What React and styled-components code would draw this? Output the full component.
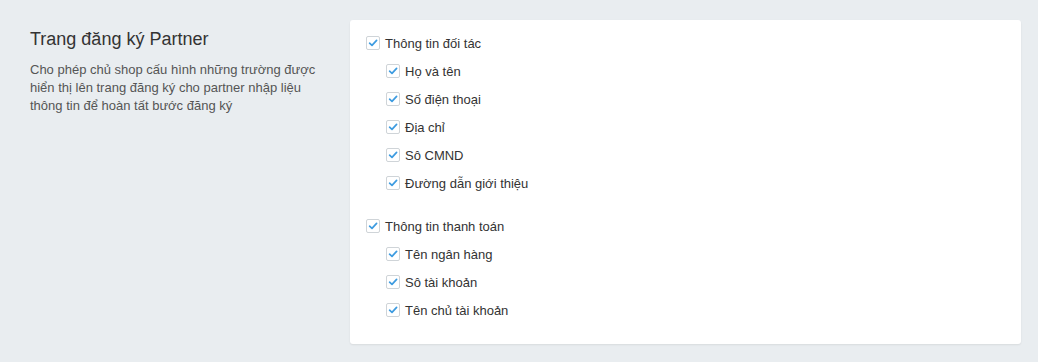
import * as React from 'react';
import styled, { createGlobalStyle } from 'styled-components';

const GlobalStyle = createGlobalStyle`
  html, body {
    margin: 0;
    padding: 0;
    background: #e9edf0;
  }
  body {
    font-family: "Liberation Sans", Arial, sans-serif;
    color: #333333;
  }
`;

const Page = styled.div`
  display: grid;
  grid-template-columns: 300px 1fr;
  column-gap: 20px;
  align-items: start;
  padding: 20px 17px 18px 30px;
  min-height: 362px;
  box-sizing: border-box;
`;

const Intro = styled.div`
  padding-top: 8px;
`;

const Title = styled.h2`
  margin: 0 0 11px;
  font-size: 18px;
  font-weight: 400;
  line-height: 22px;
  color: #333333;
`;

const Description = styled.p`
  margin: 0;
  font-size: 13px;
  line-height: 18px;
  color: #555555;
`;

const Card = styled.div`
  background: #ffffff;
  border-radius: 3px;
  box-shadow: 0 1px 2px rgba(0, 0, 0, 0.08);
  padding: 9px 16px 20px;
`;

const Group = styled.div`
  & + & {
    margin-top: 15px;
  }
`;

const Row = styled.label`
  display: flex;
  align-items: center;
  gap: 5px;
  height: 28px;
  padding-left: ${(p) => (p.$child ? '20px' : '0')};
  font-size: 13px;
  color: #333333;
  cursor: pointer;
`;

const Box = styled.span`
  width: 14px;
  height: 14px;
  box-sizing: border-box;
  border: 1px solid #cfd4d8;
  border-radius: 2px;
  background: #ffffff;
  display: inline-flex;
  align-items: center;
  justify-content: center;
  flex: none;
`;

const Check = () => (
  <svg width="10" height="10" viewBox="0 0 10 10">
    <path
      d="M1.6 5.2 L4 7.4 L8.6 2.4"
      fill="none"
      stroke="#3d9be0"
      strokeWidth="1.7"
      strokeLinecap="round"
      strokeLinejoin="round"
    />
  </svg>
);

const Option = ({ label, child }) => (
  <Row $child={child}>
    <Box>
      <Check />
    </Box>
    {label}
  </Row>
);

const groups = [
  {
    title: 'Thông tin đối tác',
    items: ['Họ và tên', 'Số điện thoại', 'Địa chỉ', 'Sô CMND', 'Đường dẫn giới thiệu'],
  },
  {
    title: 'Thông tin thanh toán',
    items: ['Tên ngân hàng', 'Sô tài khoản', 'Tên chủ tài khoản'],
  },
];

const App = () => {
  return (
    <>
      <GlobalStyle />
      <Page>
        <Intro>
          <Title>Trang đăng ký Partner</Title>
          <Description>
            Cho phép chủ shop cấu hình những trường được hiển thị lên trang đăng
            ký cho partner nhập liệu thông tin để hoàn tất bước đăng ký
          </Description>
        </Intro>
        <Card>
          {groups.map((g) => (
            <Group key={g.title}>
              <Option label={g.title} />
              {g.items.map((item) => (
                <Option key={item} label={item} child />
              ))}
            </Group>
          ))}
        </Card>
      </Page>
    </>
  );
};

export default App;
